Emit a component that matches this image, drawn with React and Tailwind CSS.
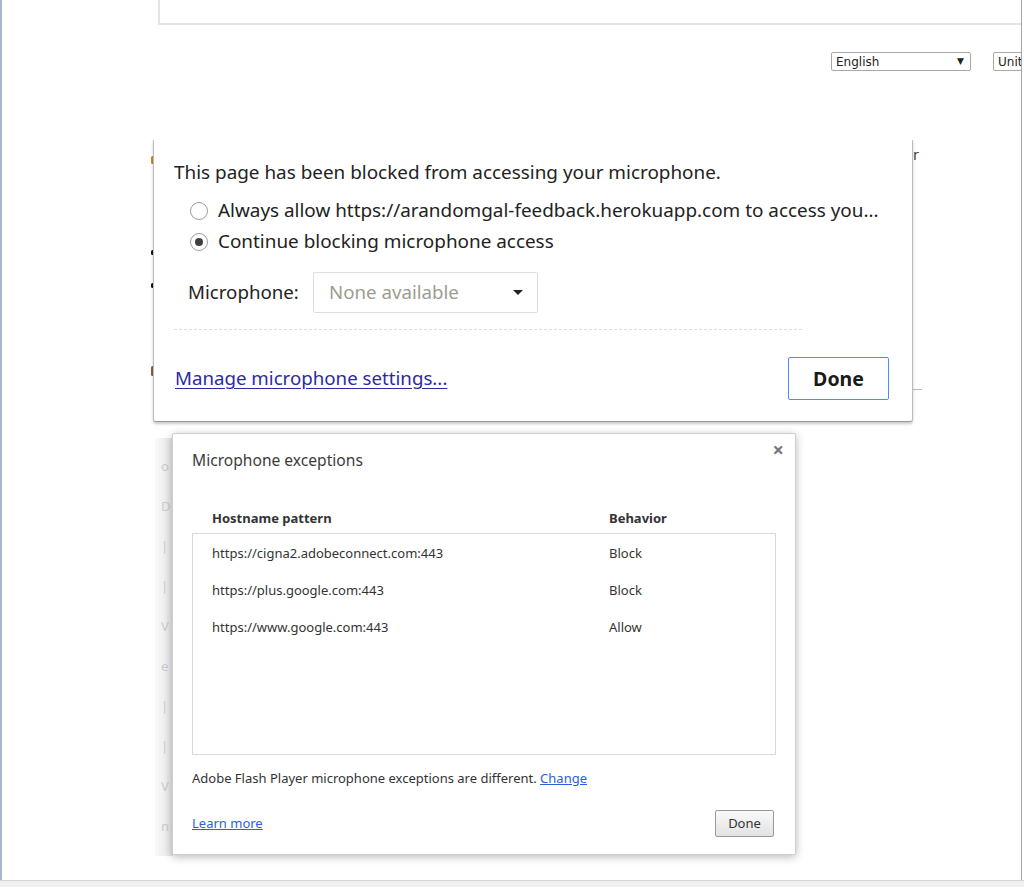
import React from "react";

function Radio({ checked }) {
  return (
    <span className="relative flex h-[18px] w-[18px] shrink-0 items-center justify-center rounded-full border border-[#9c9c9c] bg-white">
      {checked && <span className="h-[8px] w-[8px] rounded-full bg-[#3f3f3f]" />}
    </span>
  );
}

export default function App() {
  const rows = [
    ["https://cigna2.adobeconnect.com:443", "Block"],
    ["https://plus.google.com:443", "Block"],
    ["https://www.google.com:443", "Allow"],
  ];
  return (
    <div className="relative h-[887px] w-[1024px] overflow-hidden bg-white font-['Noto_Sans',sans-serif]">
      {/* background page */}
      <div className="relative h-[880px] w-[1022px] overflow-hidden border-l-2 border-r border-l-[#a9b7cd] border-r-[#a3a3a3]">
        <div className="ml-[156px] h-[25px] border-b-2 border-l-2 border-[#e4e4e4]" />
        <div className="mt-[27px] flex items-center">
          <div className="ml-[829px] flex h-[19px] w-[140px] shrink-0 items-center justify-between rounded-[2px] border border-[#a8a8a8] pl-[4px] pr-[6px] font-['DejaVu_Sans',sans-serif] text-[12px] text-[#222]">
            <span>English</span>
            <span className="text-[9px]">▼</span>
          </div>
          <div className="ml-[22px] flex h-[19px] w-[60px] shrink-0 items-center rounded-[2px] border border-[#a8a8a8] pl-[4px] font-['DejaVu_Sans',sans-serif] text-[12px] text-[#222]">
            <span>United</span>
          </div>
        </div>
      </div>
      <div className="h-[7px] border-t border-[#d6d6d6] bg-[#f0f0f0]" />

      {/* background page bits peeking out */}
      <span className="absolute left-[151px] top-[156px] h-[8px] w-[3px] rounded-full bg-[#c9821e]" />
      <span className="absolute left-[151px] top-[250px] h-[5px] w-[3px] rounded-full bg-[#111]" />
      <span className="absolute left-[151px] top-[283px] h-[5px] w-[3px] rounded-full bg-[#111]" />
      <span className="absolute left-[151px] top-[366px] h-[10px] w-[3px] rounded-full bg-[#8a5a3a]" />
      <span className="absolute left-[913px] top-[146px] font-['DejaVu_Sans',sans-serif] text-[14px] leading-[18px] text-[#444]">r</span>
      <span className="absolute left-[912px] top-[389px] h-px w-[10px] bg-[#bbb]" />
      <div className="absolute left-[155px] top-[438px] h-[418px] w-[18px] overflow-hidden bg-gradient-to-r from-[#fafafa] to-[#e4e4e4]">
        <div className="flex flex-col gap-[24px] pl-[6px] pt-[20px] text-[13px] leading-[16px] text-[#c8ccd4]">
          <span>o</span>
          <span>D</span>
          <span>|</span>
          <span>|</span>
          <span>V</span>
          <span>e</span>
          <span>|</span>
          <span>|</span>
          <span>V</span>
          <span>n</span>
        </div>
      </div>

      {/* microphone bubble */}
      <div className="absolute left-[153px] top-[140px] h-[282px] w-[760px] rounded-b-[3px] border-x border-b border-x-[#bdbdbd] border-b-[#9a9a9a] bg-white text-[#222] shadow-[0_2px_3px_rgba(0,0,0,0.22)]">
        <div className="pl-[20px] pt-[20px]">
          <div className="h-[24px] text-[18.9px] leading-[24px]">This page has been blocked from accessing your microphone.</div>
          <div className="mt-[11px] flex h-[31px] items-center pl-[16px]">
            <Radio />
            <span className="ml-[10px] text-[18.9px]">Always allow https://arandomgal-feedback.herokuapp.com to access you...</span>
          </div>
          <div className="flex h-[31px] items-center pl-[16px]">
            <Radio checked />
            <span className="ml-[10px] text-[18.9px]">Continue blocking microphone access</span>
          </div>
          <div className="mt-[15px] flex h-[41px] items-center pl-[14px]">
            <span className="w-[125px] text-[18.7px]">Microphone:</span>
            <div className="flex h-[41px] w-[225px] items-center justify-between rounded-[2px] border border-[#dedede] pl-[15px] pr-[14px]">
              <span className="text-[18.7px] text-[#9c9c90]">None available</span>
              <span className="h-0 w-0 border-x-[5px] border-t-[5px] border-x-transparent border-t-[#222]" />
            </div>
          </div>
          <div className="mt-[16px] w-[628px] border-t border-dashed border-[#dcdcdc]" />
          <div className="mt-[27px] flex h-[43px] items-center justify-between pr-[23px]">
            <span className="pl-px text-[18.7px] text-[#2b2ba0] underline underline-offset-[3px]">Manage microphone settings...</span>
            <button className="flex h-[43px] w-[101px] items-center justify-center rounded-[2px] border border-[#4d8cf5] bg-white text-[19.5px] font-bold text-[#1a1a1a]">Done</button>
          </div>
        </div>
      </div>

      {/* exceptions dialog */}
      <div className="absolute left-[172px] top-[433px] h-[422px] w-[624px] rounded-[2px] border border-[#cfcfcf] bg-white text-[#333] shadow-[0_2px_8px_rgba(0,0,0,0.28)]">
        <span className="absolute right-[11px] top-[5px] text-[20px] font-bold leading-[22px] text-[#777]">×</span>
        <div className="pl-[19px] pt-[16px]">
          <div className="h-[20px] text-[15.6px] leading-[20px] text-[#3c3c3c]">Microphone exceptions</div>
          <div className="mt-[39px] flex h-[20px] items-center text-[13px] font-bold text-[#333]">
            <span className="w-[417px] pl-[20px]">Hostname pattern</span>
            <span>Behavior</span>
          </div>
          <div className="mt-[4px] h-[222px] w-[584px] border border-[#d9d9d9] pt-px">
            {rows.map(([h, b]) => (
              <div key={h} className="flex h-[37px] items-center text-[13px] text-[#333]">
                <span className="w-[416px] pl-[19px]">{h}</span>
                <span>{b}</span>
              </div>
            ))}
          </div>
          <div className="mt-[13px] h-[20px] text-[13px] leading-[20px] text-[#333]">
            Adobe Flash Player microphone exceptions are different.{" "}
            <span className="text-[#2d5fd6] underline">Change</span>
          </div>
          <div className="mt-[22px] flex h-[27px] items-center justify-between pr-[21px]">
            <span className="text-[13px] text-[#2d5fd6] underline">Learn more</span>
            <button className="flex h-[27px] w-[59px] items-center justify-center rounded-[2px] border border-[#9a9a9a] bg-gradient-to-b from-[#fafafa] to-[#e2e2e2] text-[13px] text-[#333]">Done</button>
          </div>
        </div>
      </div>
    </div>
  );
}
